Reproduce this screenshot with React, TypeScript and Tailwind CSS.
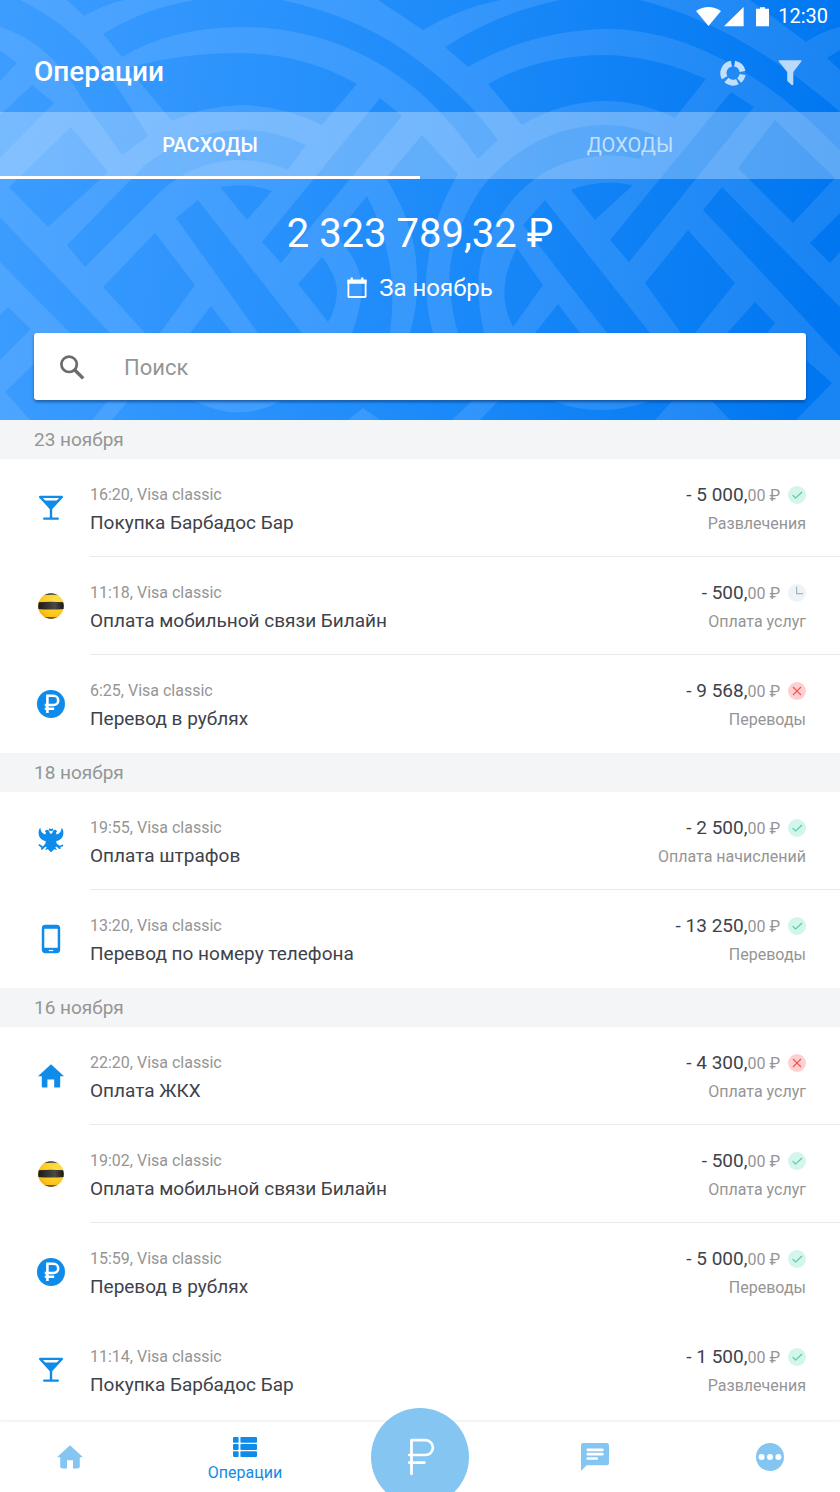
import type { ReactNode } from "react";

type IconName = "bar" | "beeline" | "ruble" | "eagle" | "phone" | "home";
type Status = "done" | "pending" | "failed";

interface Operation {
  icon: IconName;
  time: string;
  title: string;
  whole: string;
  category: string;
  status: Status;
  divider?: boolean;
}

const groups: { date: string; items: Operation[] }[] = [
  {
    date: "23 ноября",
    items: [
      { icon: "bar", time: "16:20", title: "Покупка Барбадос Бар", whole: "- 5 000,", category: "Развлечения", status: "done", divider: true },
      { icon: "beeline", time: "11:18", title: "Оплата мобильной связи Билайн", whole: "- 500,", category: "Оплата услуг", status: "pending", divider: true },
      { icon: "ruble", time: "6:25", title: "Перевод в рублях", whole: "- 9 568,", category: "Переводы", status: "failed" },
    ],
  },
  {
    date: "18 ноября",
    items: [
      { icon: "eagle", time: "19:55", title: "Оплата штрафов", whole: "- 2 500,", category: "Оплата начислений", status: "done", divider: true },
      { icon: "phone", time: "13:20", title: "Перевод по номеру телефона", whole: "- 13 250,", category: "Переводы", status: "done" },
    ],
  },
  {
    date: "16 ноября",
    items: [
      { icon: "home", time: "22:20", title: "Оплата ЖКХ", whole: "- 4 300,", category: "Оплата услуг", status: "failed", divider: true },
      { icon: "beeline", time: "19:02", title: "Оплата мобильной связи Билайн", whole: "- 500,", category: "Оплата услуг", status: "done", divider: true },
      { icon: "ruble", time: "15:59", title: "Перевод в рублях", whole: "- 5 000,", category: "Переводы", status: "done" },
      { icon: "bar", time: "11:14", title: "Покупка Барбадос Бар", whole: "- 1 500,", category: "Развлечения", status: "done" },
    ],
  },
];

const weave = [
  "M0 0H20Q75 28 103 67Q130 105 148 136L122 155L83 100Q50 42 0 27Z",
  "M67 0L84 16Q103 5 124 0Z",
  "M103 34Q145 8 195 0H282Q365 18 420 62Q470 100 498 140L478 159Q455 125 425 97Q345 27 240 27Q170 28 122 57Z",
  "M128 68Q180 53 240 53Q305 54 357 84L322 125Q285 106 240 105Q205 106 172 121Z",
  "M306 145Q275 130 240 130Q185 132 145 165L67 245L85 267L160 192Q195 160 240 160Q268 161 288 170Z",
  "M220 187Q250 182 272 191L247 220Z",
  "M198 200L302 333H258L176 218Z",
  "M155 233L195 285L160 333H145L103 287Z",
  "M211 306L232 333H190Z",
  "M380 98L402 116L345 185L281 263L262 242Z",
  "M367 196L335 235Q362 262 362 290Q360 312 352 333H390Q400 260 367 196Z",
  "M298 284L322 257Q337 276 337 292Q336 310 328 322Z",
  "M422 135L386 178Q412 220 416 260Q420 300 410 333H433Q426 310 426 280Q430 220 458 174Z",
  "M0 50L17 63L0 81Z",
  "M32 85L54 103L0 158V115Z",
  "M71 127L108 172L48 227L9 187Z",
  "M0 217L110 333H70L0 262Z",
  "M8 307L31 329L0 360V315Z",
  "M5 392L34 364V401H108L92 420H30Z",
  "M128 401H195Q240 424 280 401H472L452 420H380L363 408L348 420H112Z",
  "M378 0L423 30Q460 8 500 0Z",
  "M445 47Q500 12 560 0H640Q740 25 840 112V150Q720 28 605 29Q530 31 468 67Z",
  "M488 84Q540 55 605 55Q655 56 706 79L675 118Q640 101 605 101Q560 102 522 125Z",
  "M658 137Q635 125 603 125Q530 127 480 190Q445 245 450 290Q452 312 458 333H484Q474 290 482 255Q500 200 545 172Q590 148 640 159Z",
  "M571 190Q600 178 633 185L595 220Z",
  "M731 92L754 107L629 262L610 240Z",
  "M775 120L835 178L793 223L738 168Z",
  "M722 187L840 307V357L753 263L703 210Z",
  "M688 230L735 283L695 333H681L645 283Z",
  "M755 302L775 323L767 333H727Z",
  "M545 200L650 333H607L523 225Z",
  "M517 248L543 285L513 327Q494 290 517 248Z",
  "M558 304L580 333H535Z",
  "M810 243L840 213V252L830 263Z",
  "M750 0L806 42Q820 32 840 27V0Z",
  "M827 58L840 50V70Z",
  "M806 360L832 383L796 420H730L712 401H806Z",
  "M498 401H553Q600 419 650 401H672L655 420H480Z",
].join("");

function Backdrop() {
  return (
    <svg className="absolute inset-0 h-full w-full" viewBox="0 0 840 420" preserveAspectRatio="none" aria-hidden="true">
      <defs>
        <linearGradient id="sky" gradientUnits="userSpaceOnUse" x1="0" y1="0" x2="840" y2="80">
          <stop offset="0" stopColor="#50a6ff" />
          <stop offset="0.5" stopColor="#3899fd" />
          <stop offset="1" stopColor="#1984f3" />
        </linearGradient>
        <linearGradient id="deep" gradientUnits="userSpaceOnUse" x1="0" y1="0" x2="840" y2="80">
          <stop offset="0" stopColor="#3d9dff" />
          <stop offset="0.5" stopColor="#1f8cfa" />
          <stop offset="1" stopColor="#0077f1" />
        </linearGradient>
      </defs>
      <rect width="840" height="420" fill="url(#sky)" />
      <path d={weave} fill="url(#deep)" />
    </svg>
  );
}

function Glyph({ name }: { name: IconName }) {
  const drawings: Record<IconName, ReactNode> = {
    bar: (
      <>
        <path d="M6.2 5.9H27.8L17 17.6Z" fill="none" stroke="#0f8ce9" strokeWidth="2.4" strokeLinejoin="round" />
        <path d="M9.6 9.6H24.4L17 17.8Z" fill="#0f8ce9" />
        <path d="M17 17V27.3M10.2 27.6H23.8" stroke="#0f8ce9" strokeWidth="2.4" strokeLinecap="round" />
      </>
    ),
    beeline: (
      <>
        <defs>
          <clipPath id="ball"><circle cx="17" cy="17" r="12.8" /></clipPath>
          <radialGradient id="gold" cx="0.62" cy="0.35" r="0.75">
            <stop offset="0" stopColor="#ffe14a" />
            <stop offset="0.6" stopColor="#fdc417" />
            <stop offset="1" stopColor="#d48f08" />
          </radialGradient>
          <linearGradient id="coal">
            <stop offset="0" stopColor="#1b1918" />
            <stop offset="0.65" stopColor="#4c4a47" />
            <stop offset="1" stopColor="#151413" />
          </linearGradient>
        </defs>
        <g clipPath="url(#ball)">
          <rect width="34" height="34" fill="url(#gold)" />
          <path d="M4 4H30V6.6Q17 4.8 4 6.6ZM4 13.3Q17 12.4 30 13.3V20Q17 21 4 20ZM4 27.4Q17 29.2 30 27.4V31H4Z" fill="url(#coal)" />
        </g>
      </>
    ),
    ruble: (
      <>
        <circle cx="17" cy="17" r="14" fill="#0f8ce9" />
        <path d="M13.4 26V8.8H19.6A4.6 4.6 0 0 1 19.6 18H10.8M10.8 21.8H20.2" fill="none" stroke="#fff" strokeWidth="2.6" />
      </>
    ),
    eagle: (
      <g fill="#0f8ce9">
        <path d="M6.3 3.8C6.6 7.3 8 9.4 11.2 10.4C12.3 8.9 12.1 7.9 10.8 7.4C12.4 4.8 15 5.3 15.5 8.6L17 10.2L18.5 8.6C19 5.3 21.6 4.8 23.2 7.4C21.9 7.9 21.7 8.9 22.8 10.4C26 9.4 27.4 7.3 27.7 3.8C29.2 5.2 29.6 7.5 29.3 10.2C28.8 14 26.2 16.2 22.2 17L22.6 19.4L25.6 21.8L28.8 20.5L29.4 22.1L26.2 23.3L26.8 25.1L24.8 24.8L22.8 22.8L21.2 23.1L23 26.1L20.2 25.3L17 28.3L13.8 25.3L11 26.1L12.8 23.1L11.2 22.8L9 25.2L7 26L7.3 23.7L4.4 21.2L5.4 20L8.9 22.4L11.4 19.4L11.8 17C7.8 16.2 5.2 14 4.7 10.2C4.4 7.5 4.8 5.2 6.3 3.8Z" />
        <path d="M14.6 6.2L15.2 4.2L17 5.2L18.8 4.2L19.4 6.2L17 7.3Z" />
      </g>
    ),
    phone: (
      <>
        <rect x="7.8" y="2.8" width="18.4" height="28.4" rx="3.6" fill="#0f8ce9" />
        <rect x="10.3" y="6.8" width="13.4" height="19" fill="#fff" />
        <path d="M14.8 28.5H19.2" stroke="#fff" strokeWidth="1.2" />
      </>
    ),
    home: <path d="M17 5.2L4 17.3H7.8V27.6Q7.8 28.4 8.6 28.4H13.4V20.4H20.2V28.4H25.4Q26.2 28.4 26.2 27.6V17.3H30L26.2 13.8Z" fill="#0f8ce9" />,
  };
  return (
    <svg className="h-[34px] w-[34px] shrink-0" viewBox="0 0 34 34" aria-hidden="true">
      {drawings[name]}
    </svg>
  );
}

function StatusMark({ status }: { status: Status }) {
  return (
    <svg className="h-[18px] w-[18px] shrink-0" viewBox="0 0 18 18" fill="none" aria-hidden="true">
      {status === "done" && (
        <>
          <circle cx="9" cy="9" r="9" fill="#d3f5ec" />
          <path d="M4.6 9.2L7.6 12.1L14 6" stroke="#4bc9a4" strokeWidth="1.1" />
        </>
      )}
      {status === "pending" && (
        <>
          <circle cx="9" cy="9" r="9" fill="#edf3f6" />
          <path d="M8.6 2.8V9.6H15" stroke="#a9b4ba" strokeWidth="1.2" />
        </>
      )}
      {status === "failed" && (
        <>
          <circle cx="9" cy="9" r="9" fill="#ffd0d0" />
          <path d="M5 5L13 13M13 5L5 13" stroke="#ee5257" strokeWidth="1.1" />
        </>
      )}
    </svg>
  );
}

function OperationRow({ op }: { op: Operation }) {
  return (
    <li className="flex h-[98px] items-stretch pl-[34px]">
      <div className="flex w-14 shrink-0 items-center">
        <Glyph name={op.icon} />
      </div>
      <div className={`flex min-w-0 flex-1 justify-between border-b pt-[25px] pr-[34px] ${op.divider ? "border-[#e6eaec]" : "border-transparent"}`}>
        <div className="min-w-0">
          <p className="text-[16px] leading-[22px] text-[#959595]">{op.time}, Visa classic</p>
          <p className="text-[19px] leading-[34px] text-[#3e424b]">{op.title}</p>
        </div>
        <div className="shrink-0 text-right">
          <p className="flex h-[22px] items-center justify-end">
            <span className="mr-2 text-[19px] leading-[22px] text-[#3e424b]">
              {op.whole}
              <span className="text-[16px] text-[#959595]">00 ₽</span>
            </span>
            <StatusMark status={op.status} />
          </p>
          <p className="text-[16px] leading-[36px] text-[#959595]">{op.category}</p>
        </div>
      </div>
    </li>
  );
}

function StatusBar() {
  return (
    <div className="flex h-8 items-center justify-end pr-3 text-white">
      <svg className="h-[22px] w-[76px]" viewBox="0 0 76 22" fill="#fff" aria-hidden="true">
        <path d="M1 6Q13.5-1.8 26 6L13.5 21Z" />
        <path d="M29 21.3L48.6 2V21.3Z" />
        <path d="M61 3.8H65V2.2H70V3.8H74V21.3H61Z" />
      </svg>
      <span className="ml-[7px] text-[20px] leading-6">12:30</span>
    </div>
  );
}

export default function App() {
  return (
    <div className="flex min-h-screen flex-col overflow-clip bg-white font-[Roboto,'Noto_Sans',sans-serif]">
      <header className="relative bg-[#2f93fb]">
        <Backdrop />
        <div className="relative">
          <StatusBar />
          <div className="flex h-20 items-center justify-between px-[34px]">
            <h1 className="text-[28px] leading-8 font-medium text-white">Операции</h1>
            <div className="flex items-center gap-7">
              <button type="button" aria-label="Аналитика">
                <svg className="h-7 w-7" viewBox="0 0 28 28" fill="none" aria-hidden="true">
                  <g stroke="#c2dffd" strokeWidth="6" transform="translate(1 1)">
                    <path d="M15.6 4.6A9.6 9.6 0 0 1 23.5 12.4" />
                    <path d="M23.6 15.6A9.6 9.6 0 0 1 20.1 21.5" />
                    <path d="M18.4 22.6A9.6 9.6 0 0 1 7.4 21" />
                    <path d="M5.6 18.8A9.6 9.6 0 0 1 12.4 4.6" />
                  </g>
                </svg>
              </button>
              <button type="button" aria-label="Фильтр">
                <svg className="h-7 w-8" viewBox="0 0 32 28" fill="#bbd9fc" aria-hidden="true">
                  <path d="M5.4 2.3H26.6Q28 2.3 27.3 3.6L19.3 14V26.8L18 27.3L13.2 23.1V14L4.8 3.6Q4.1 2.3 5.4 2.3Z" />
                </svg>
              </button>
            </div>
          </div>

          <div className="grid h-[67px] grid-cols-2 bg-white/30" role="tablist">
            <button type="button" role="tab" aria-selected="true" className="border-b-3 border-white pt-0.5 text-[20px] leading-6 font-medium text-white">
              РАСХОДЫ
            </button>
            <button type="button" role="tab" aria-selected="false" className="border-b-3 border-transparent pt-0.5 text-[20px] leading-6 text-[#c3e0ff]">
              ДОХОДЫ
            </button>
          </div>

          <div className="px-[34px] pt-[29px] pb-5 text-center text-white">
            <p className="text-[40px] leading-[52px]">2 323 789,32 ₽</p>
            <button type="button" className="mx-auto mt-[11px] flex h-[34px] items-center gap-3 text-[24px] leading-[34px]">
              <svg className="h-[22px] w-5" viewBox="0 0 20 22" fill="none" aria-hidden="true">
                <path d="M1.4 4H18.6V19.6Q18.6 20 18.2 20H1.8Q1.4 20 1.4 19.6Z" stroke="#fff" strokeWidth="1.8" />
                <path d="M.5 2.6H19.5V6.8H.5ZM3.6 .4H5.8V4H3.6ZM14.2 .4H16.4V4H14.2Z" fill="#fff" />
              </svg>
              За ноябрь
            </button>
            <label className="mt-7 flex h-[67px] items-center gap-9 rounded-[3px] bg-white pl-5 shadow-[0_2px_3px_rgba(0,50,110,0.6)]">
              <svg className="h-[34px] w-[34px] shrink-0" viewBox="0 0 34 34" fill="none" stroke="#6b6b6b" aria-hidden="true">
                <circle cx="15.1" cy="14.3" r="7.7" strokeWidth="2.7" />
                <path d="M21 20.2L29.2 28.4" strokeWidth="3.4" />
              </svg>
              <input
                type="search"
                aria-label="Поиск"
                placeholder="Поиск"
                className="min-w-0 flex-1 bg-transparent pt-0.5 text-[22px] leading-8 text-[#3e424b] outline-none placeholder:text-[#959595]"
              />
            </label>
          </div>
        </div>
      </header>

      <main className="flex-1">
        {groups.map((group) => (
          <section key={group.date}>
            <h2 className="h-[39px] bg-[#f3f5f6] px-[34px] text-[19px] leading-[39px] text-[#959595]">{group.date}</h2>
            <ul>
              {group.items.map((op) => (
                <OperationRow key={op.time} op={op} />
              ))}
            </ul>
          </section>
        ))}
      </main>

      <nav className="sticky bottom-0 flex h-[70px] items-center justify-between bg-white shadow-[0_-1px_3px_rgba(0,0,0,0.08)]">
        <a href="#home" aria-label="Главная" className="flex w-[140px] justify-center">
          <svg className="h-[34px] w-[34px]" viewBox="0 0 34 34" fill="#84c5f2" aria-hidden="true">
            <path d="M17 5.2L4 17.3H7.2V26.6Q7.2 28.4 9 28.4H14V20.2H20V28.4H25Q26.8 28.4 26.8 26.6V17.3H30Z" />
          </svg>
        </a>
        <a href="#operations" className="flex w-[140px] flex-col items-center pt-2 text-[#0f8ce9]">
          <svg className="h-5 w-6" viewBox="0 0 24 20" fill="#0f8ce9" aria-hidden="true">
            <rect width="5.6" height="5.8" rx="1" />
            <rect x="7.4" width="16.6" height="5.8" rx="1" />
            <rect y="7.1" width="5.6" height="5.8" rx="1" />
            <rect x="7.4" y="7.1" width="16.6" height="5.8" rx="1" />
            <rect y="14.2" width="5.6" height="5.8" rx="1" />
            <rect x="7.4" y="14.2" width="16.6" height="5.8" rx="1" />
          </svg>
          <span className="mt-1 text-[16px] leading-6">Операции</span>
        </a>
        <a href="#pay" aria-label="Платежи" className="flex w-[140px] justify-center">
          <svg className="h-[98px] w-[98px] shrink-0" viewBox="0 0 98 98" fill="none" aria-hidden="true">
            <circle cx="49" cy="49" r="49" fill="#84c5f2" />
            <path d="M40.5 66V32.2H54.5A7.4 7.4 0 0 1 54.5 47H38.2M38.2 54.6H53.4" stroke="#fff" strokeWidth="2.7" strokeLinecap="round" strokeLinejoin="round" />
          </svg>
        </a>
        <a href="#chat" aria-label="Сообщения" className="flex w-[140px] justify-center">
          <svg className="h-7 w-7" viewBox="0 0 28 28" aria-hidden="true">
            <path d="M2.3 0H25.7Q28 0 28 2.3V20Q28 22.3 25.7 22.3H5.6L0 28V2.3Q0 0 2.3 0Z" fill="#84c5f2" />
            <path d="M6.8 6.9H21.4M6.8 11.2H21.4M6.8 15.5H15.8" stroke="#fff" strokeWidth="2.7" strokeLinecap="round" />
          </svg>
        </a>
        <a href="#more" aria-label="Ещё" className="flex w-[140px] justify-center">
          <svg className="h-7 w-7" viewBox="0 0 28 28" aria-hidden="true">
            <circle cx="14" cy="14" r="14" fill="#84c5f2" />
            <path d="M5.6 14H5.61M14 14H14.01M22.4 14H22.41" stroke="#fff" strokeWidth="6" strokeLinecap="round" />
          </svg>
        </a>
      </nav>
    </div>
  );
}
